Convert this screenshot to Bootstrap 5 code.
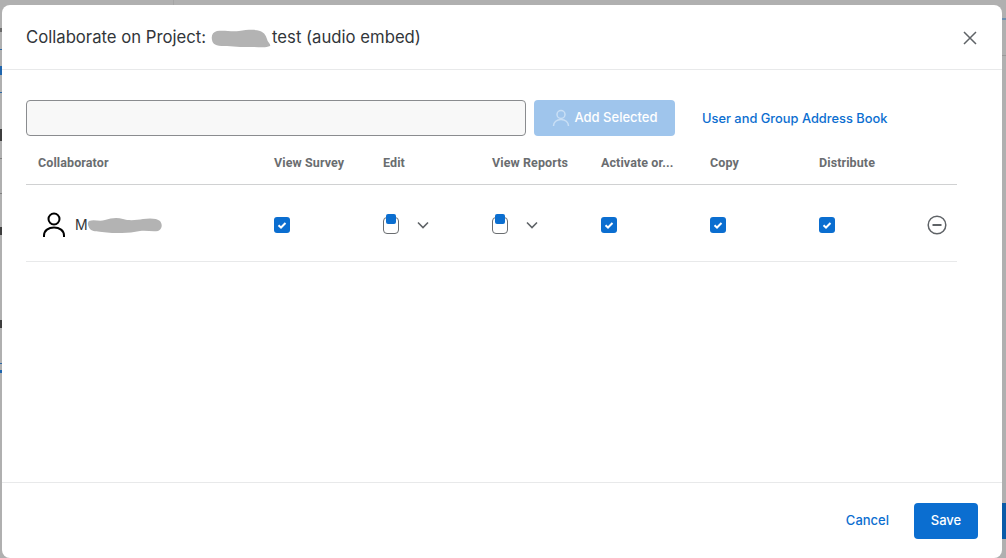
<!DOCTYPE html>
<html lang="en">
<head>
<meta charset="utf-8">
<title>Collaborate on Project</title>
<link href="https://cdn.jsdelivr.net/npm/bootstrap@5.3.0/dist/css/bootstrap.min.css" rel="stylesheet">
<style>
html,body{height:100%;}
body{background:#b0b0b0;overflow:hidden;font-family:Inter,"Liberation Sans",sans-serif;color:#32363a;padding:5px 4px 0 2px;position:relative;}
.bg-mark{position:absolute;display:block;left:0;width:2px;height:2px;background:#6a6a6a;}
.m-top{left:173px;top:0;width:1px;height:5px;background:#a5a5a5;}
.m1{top:28px;height:4px;}
.m2{top:49px;height:1px;background:#2d68a5;}
.m3{top:66px;height:9px;background:#1f65ad;}
.m4{top:92px;height:1px;background:#2d68a5;}
.m5{top:129px;height:12px;background:#3d3d3d;}
.m6{top:158px;height:1px;background:#808080;}
.m7{top:193px;height:1px;background:#808080;}
.m8{top:227px;height:8px;background:#3d3d3d;}
.m9{top:320px;height:8px;background:#3d3d3d;}
.m10{top:363px;height:1px;background:#2d68a5;}
.m11{top:370px;height:3px;background:#1f65ad;}
.r1{left:1002px;width:4px;top:18px;height:2px;background:#6f90b0;}
.r2{left:1002px;width:4px;top:55px;height:1px;background:#9a9a9a;}
.r3{left:1002px;width:4px;top:503px;height:36px;background:#0a5ba8;}
.collab-shell{height:553px;width:1000px;border-radius:8px;background:#fff;position:relative;}
.collab-head{height:65px;padding:1px 24px 0;border-bottom:1px solid #e8e9ea;}
.collab-title{font-size:16.7px;font-weight:400;color:#32363a;margin:0;}
.blob-title{margin:0 0 0 5px;display:block;}
.blob-name{margin-left:-1px;display:block;}
.close-x{background:none;border:0;padding:0;line-height:0;margin-right:1px;}
.collab-body{padding:30px 45px 0 24px;}
.search-box{width:500px;height:36px;background:#f8f8f8;border:1px solid #8a8c8f;border-radius:4px;}
.btn-add{height:36px;width:141px;background:#9fc5ec;border:0;color:#fff;font-size:13px;font-weight:500;border-radius:4px;padding:0 0 0 1px;opacity:1;}
.book-link{font-size:12.85px;color:#0b6ed0;text-decoration:none;font-weight:500;margin-top:1px;margin-left:27px;}
.perm-table{table-layout:fixed;width:931px;margin:8px 0 0;border-collapse:collapse;--bs-table-bg:transparent;}
.perm-table th{height:40px;padding:0 12px;font-family:Roboto,sans-serif;font-size:12.5px;font-weight:700;color:#6a6d70;border-bottom:1px solid #d0d1d2;white-space:nowrap;vertical-align:middle;letter-spacing:.1px;overflow:hidden;}
.perm-table td{height:77px;padding:4px 12px 0;vertical-align:middle;border-bottom:1px solid #e8e9ea;font-size:14px;color:#32363a;}
.col-name{width:236px;}.col-perm{width:109px;}.col-end{width:41px;}
.tick{width:16px;height:16px;background:#0b6ed0;border-radius:3px;display:block;line-height:0;}
.part-box{width:16px;height:17px;display:block;position:relative;border:1px solid #6a6d70;border-radius:4px;background:#fff;margin-top:1px;}
.part-fill{position:absolute;left:2px;top:-4px;width:10px;height:10px;background:#0b6ed0;border-radius:2px;}
.chev{margin-left:18px;}
.who{margin-left:4px;gap:9px;}
.who-name{font-size:14px;}
.minus-ico{margin-left:11px;display:block;}
.collab-foot{position:absolute;left:0;right:0;bottom:0;height:76px;border-top:1px solid #e8e9ea;padding:0 24px;}
.btn-cancel{font-size:13px;font-weight:500;color:#0b6ed0;padding:0;margin-right:25px;background:none;border:0;}
.btn-save{width:64px;height:36px;background:#0b6ed0;border:0;border-radius:4px;color:#fff;font-size:13px;font-weight:500;padding:0;}
</style>
</head>
<body>
<span class="bg-mark m-top"></span>
<span class="bg-mark m1"></span><span class="bg-mark m2"></span><span class="bg-mark m3"></span><span class="bg-mark m4"></span><span class="bg-mark m5"></span><span class="bg-mark m6"></span><span class="bg-mark m7"></span><span class="bg-mark m8"></span><span class="bg-mark m9"></span><span class="bg-mark m10"></span><span class="bg-mark m11"></span>
<span class="bg-mark r1"></span><span class="bg-mark r2"></span><span class="bg-mark r3"></span>
<div class="collab-shell d-flex flex-column">
  <div class="collab-head d-flex align-items-center justify-content-between">
    <h5 class="collab-title d-flex align-items-center">Collaborate on Project:<svg class="blob-title" width="61" height="20" viewBox="0 0 61 20"><path d="M6 3c8-1 14 1 22 0s15-2 21 0c5 2 6 5 7 8 1 4 4 5 3 7-4 2-10 1-16 1-10 0-18 0-27-1-8 0-14 0-15-6C0 7 2 4 6 3z" fill="#b3b3b3"/></svg>test (audio embed)</h5>
    <button class="close-x" type="button" aria-label="Close"><svg width="14" height="14" viewBox="0 0 14 14"><path d="M1 1l12 12M13 1L1 13" stroke="#5f6367" stroke-width="1.5" fill="none"/></svg></button>
  </div>
  <div class="collab-body">
    <div class="d-flex align-items-center">
      <div class="search-box"></div>
      <button class="btn btn-add ms-2 d-flex align-items-center justify-content-center gap-1" type="button">
        <svg width="18" height="18" viewBox="0 0 18 18" fill="none" stroke="#c9dff5" stroke-width="1.5"><circle cx="9" cy="5.500" r="4"/><path d="M1.500 17c0-4 3.300-6.500 7.500-6.500s7.500 2.500 7.500 6.500"/></svg>
        <span>Add Selected</span>
      </button>
      <a class="book-link" href="#">User and Group Address Book</a>
    </div>
    <table class="table perm-table">
      <thead><tr>
        <th class="col-name">Collaborator</th><th class="col-perm">View Survey</th><th class="col-perm">Edit</th><th class="col-perm">View Reports</th><th class="col-perm">Activate or...</th><th class="col-perm">Copy</th><th class="col-perm">Distribute</th><th class="col-end"></th>
      </tr></thead>
      <tbody><tr>
        <td><div class="d-flex align-items-center who">
          <svg width="24" height="26" viewBox="0 0 24 26" fill="none" stroke="#000" stroke-width="2"><circle cx="12" cy="7" r="5.500"/><path d="M2 25v-1.500c0-5 4.500-8 10-8s10 3 10 8V25"/></svg>
          <span class="who-name d-flex align-items-center">M<svg class="blob-name" width="76" height="20" viewBox="0 0 76 20"><path d="M2 6c6-2 10 1 16-1s12-3 18-1 14 1 20 0 14-1 17 2c3 4 2 8-2 10-6 1-12-1-18 0s-12 2-18 2-14 0-20-1-9 0-12-3C1 11 0 8 2 6z" fill="#b3b3b3"/></svg></span>
        </div></td>
        <td><span class="tick"><svg width="16" height="16" viewBox="0 0 16 16" fill="none" stroke="#fff" stroke-width="2"><path d="M4.500 8.200l2.500 2.300 4.500-4.500"/></svg></span></td>
        <td><div class="d-flex align-items-center"><span class="part-box"><span class="part-fill"></span></span><svg class="chev" width="12" height="8" viewBox="0 0 12 8" fill="none" stroke="#5f6367" stroke-width="1.600"><path d="M1 1.500l5 5 5-5"/></svg></div></td>
        <td><div class="d-flex align-items-center"><span class="part-box"><span class="part-fill"></span></span><svg class="chev" width="12" height="8" viewBox="0 0 12 8" fill="none" stroke="#5f6367" stroke-width="1.600"><path d="M1 1.500l5 5 5-5"/></svg></div></td>
        <td><span class="tick"><svg width="16" height="16" viewBox="0 0 16 16" fill="none" stroke="#fff" stroke-width="2"><path d="M4.500 8.200l2.500 2.300 4.500-4.500"/></svg></span></td>
        <td><span class="tick"><svg width="16" height="16" viewBox="0 0 16 16" fill="none" stroke="#fff" stroke-width="2"><path d="M4.500 8.200l2.500 2.300 4.500-4.500"/></svg></span></td>
        <td><span class="tick"><svg width="16" height="16" viewBox="0 0 16 16" fill="none" stroke="#fff" stroke-width="2"><path d="M4.500 8.200l2.500 2.300 4.500-4.500"/></svg></span></td>
        <td class="px-0"><svg class="minus-ico" width="20" height="20" viewBox="0 0 20 20" fill="none" stroke="#5f6367" stroke-width="1.500"><circle cx="10" cy="10" r="8.800"/><path d="M5.500 10h9" stroke-width="2"/></svg></td>
      </tr></tbody>
    </table>
  </div>
  <div class="collab-foot d-flex align-items-center justify-content-end">
    <button class="btn-cancel" type="button">Cancel</button>
    <button class="btn-save" type="button">Save</button>
  </div>
</div>
<script src="https://cdn.jsdelivr.net/npm/bootstrap@5.3.0/dist/js/bootstrap.bundle.min.js"></script>
</body>
</html>
